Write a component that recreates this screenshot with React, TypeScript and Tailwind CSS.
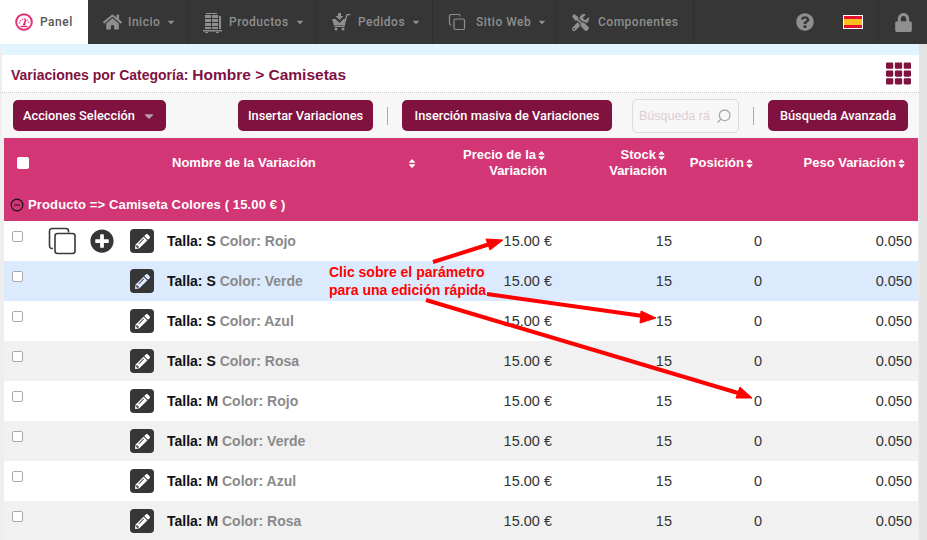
import { Copy, Search, CircleMinus } from "lucide-react";
import { FaHome, FaLock, FaPencilAlt, FaPlusCircle, FaQuestionCircle, FaSort, FaTh, FaTools, FaCaretDown } from "react-icons/fa";

const roboto = { fontFamily: "Roboto, sans-serif" };

const PanelIcon = () => (
  <svg width="18" height="18" viewBox="0 0 18 18" fill="none" className="shrink-0">
    <circle cx="9" cy="9" r="7.800" stroke="#e5337a" strokeWidth="2" />
    <path d="M4.500 10.500a4.500 4.500 0 0 1 9 0" stroke="#e5337a" strokeWidth="1.400" strokeDasharray="1.200 1.200" />
    <path d="M8.300 12L10.500 6.500L10 12Z" fill="#e5337a" stroke="#e5337a" />
    <path d="M5.500 13.500h7" stroke="#e5337a" strokeWidth="1.400" />
  </svg>
);

const StockIcon = () => (
  <svg width="19" height="21" viewBox="0 0 19 21" fill="#8f8f8f">
    <path d="M3 1h11v1H3zM2 3h6v3H2zM9 3h6v3H9zM2 7h6v3H2zM9 7h6v3H9zM2 11h6v3H2zM9 11h6v3H9zM2 15h6v2H2zM9 15h6v2H9z" />
    <path d="M16 4h2v13h-2zM0 18h19v1.500H0zM2 20h3v1H2zM13 20h3v1h-3z" />
  </svg>
);

const CartIcon = () => (
  <svg width="19" height="18" viewBox="0 0 19 18" fill="#8f8f8f">
    <path d="M6 0h3v3h2.500L7.500 7L3.500 3H6z" />
    <path d="M0 6h3.500l3 3 1 .8 1-.8 3-3H14l-1.800 6.500H2z" />
    <path d="M13 6l1.500-5H18.500v1.200h-3L13 11.500 12.500 14H2.500v-1h9z" />
    <circle cx="4" cy="16" r="1.500" />
    <circle cx="11" cy="16" r="1.500" />
  </svg>
);

const navItems = [
  { label: "Inicio", w: "w-[100px]", box: "w-[19px]", icon: <FaHome size={20} />, caret: true },
  { label: "Productos", w: "w-[129px]", box: "w-[20px]", icon: <StockIcon />, caret: true },
  { label: "Pedidos", w: "w-[116px]", box: "w-[20px]", icon: <CartIcon />, caret: true },
  { label: "Sitio Web", w: "w-[124px]", box: "w-[22px]", icon: <Copy size={18} strokeWidth={1.6} />, caret: true },
  { label: "Componentes", w: "w-[137px]", box: "w-[20px]", icon: <FaTools size={17} />, caret: false },
];

const rows = [
  { talla: "S", color: "Rojo", bg: "bg-white", first: true },
  { talla: "S", color: "Verde", bg: "bg-[#dbebfd]" },
  { talla: "S", color: "Azul", bg: "bg-white" },
  { talla: "S", color: "Rosa", bg: "bg-[#f1f1f1]" },
  { talla: "M", color: "Rojo", bg: "bg-white" },
  { talla: "M", color: "Verde", bg: "bg-[#f1f1f1]" },
  { talla: "M", color: "Azul", bg: "bg-white" },
  { talla: "M", color: "Rosa", bg: "bg-[#f1f1f1]" },
];

const gridCols = "grid grid-cols-[35px_115px_263px_135px_120px_90px_152px]";

const Btn = ({ children, className = "" }: { children: React.ReactNode; className?: string }) => (
  <button className={`h-[31px] rounded-[5px] bg-[#80123f] pt-[1px] text-[12.800px] font-medium text-white ${className}`} style={roboto}>
    {children}
  </button>
);

const Sort = () => <FaSort size={11} className="shrink-0 text-white" />;

export default function App() {
  return (
    <div className="relative h-[540px] w-[927px] overflow-hidden bg-[#eeeeee]" style={{ fontFamily: '"Liberation Sans", sans-serif' }}>
      {/* top bar */}
      <nav className="flex h-[44px] bg-[#363636] text-[12px] font-medium tracking-[0.5px] text-[#8f8f8f]" style={roboto}>
        <div className="flex w-[88px] items-center gap-[7px] bg-white pl-[15px] text-[#555]">
          <PanelIcon />
          Panel
        </div>
        {navItems.map((item) => (
          <div key={item.label} className={`flex ${item.w} items-center gap-[6px] border-r border-[#2e2e2e] pl-[15px]`}>
            <div className={`${item.box} flex shrink-0 justify-start`}>{item.icon}</div>
            <span>{item.label}</span>
            {item.caret && <FaCaretDown size={10} />}
          </div>
        ))}
        <div className="ml-auto flex items-center">
          <FaQuestionCircle size={18} />
          <div className="ml-[29px] flex h-[14px] w-[20px] flex-col border border-white">
            <div className="h-[3px] bg-[#e8112d]" />
            <div className="flex-1 bg-[#fcbf1e]" />
            <div className="h-[3px] bg-[#e8112d]" />
          </div>
          <div className="ml-[15px] flex h-[44px] w-[49px] items-center justify-center border-l border-[#2e2e2e]">
            <FaLock size={19} />
          </div>
        </div>
      </nav>

      <div className="ml-[2px] w-[917px]">
        <div className="h-[11px] bg-[#e0f5fd]" />
        {/* title */}
        <div className="flex h-[38px] items-center justify-between border-b border-dotted border-[#c8c8c8] bg-white pl-[9px] pr-[8px]">
          <h1 className="pt-[2px] text-[14px] font-bold text-[#80123f]">
            Variaciones por Categoría: <span className="text-[15.500px]">Hombre &gt; Camisetas</span>
          </h1>
          <FaTh size={25} className="text-[#80123f]" />
        </div>
        {/* toolbar */}
        <div className="flex h-[45px] items-center bg-[#f7f7f7] pl-[11px]">
          <Btn className="flex w-[153px] items-center justify-between pl-[10px] pr-[10px]">
            Acciones Selección
            <FaCaretDown size={14} className="text-[#b8a0aa]" />
          </Btn>
          <Btn className="ml-[72px] w-[135px]">Insertar Variaciones</Btn>
          <div className="mx-[14px] h-[18px] w-px bg-[#aaa]" />
          <Btn className="w-[210px]">Inserción masiva de Variaciones</Btn>
          <div className="ml-[20px] flex h-[34px] w-[107px] items-center justify-between rounded-[5px] border border-[#ddd] pl-[6px] pr-[6px]">
            <span className="overflow-hidden whitespace-nowrap pt-[1px] text-[12.500px] text-[#e0cdd4]">Búsqueda rá</span>
            <Search size={16} className="shrink-0 -scale-x-100 text-[#aaa]" />
          </div>
          <div className="mx-[14px] h-[18px] w-px bg-[#aaa]" />
          <Btn className="w-[140px]">Búsqueda Avanzada</Btn>
        </div>
      </div>

      {/* table */}
      <div className="ml-[4px] w-[914px]">
        <div className={`${gridCols} h-[50px] items-center bg-[#d23674] text-[13px] font-bold leading-[16px] text-white`}>
          <div className="pl-[13px]">
            <div className="h-[12px] w-[12px] rounded-[2px] bg-white" />
          </div>
          <div className="col-span-2 flex items-center">
            <span className="ml-[133px] w-[256px] whitespace-nowrap">Nombre de la Variación</span>
            <FaSort size={11} />
          </div>
          <div className="flex justify-end pr-[5px] text-right">
            <div>
              <div className="flex items-center justify-end">Precio de la<Sort /></div>
              <div>Variación</div>
            </div>
          </div>
          <div className="flex justify-end pr-[5px] text-right">
            <div>
              <div className="flex items-center justify-end">Stock<Sort /></div>
              <div>Variación</div>
            </div>
          </div>
          <div className="flex items-center justify-end pr-[7px]">Posición<Sort /></div>
          <div className="flex items-center justify-end pr-[7px]">Peso Variación<Sort /></div>
        </div>
        <div className="flex h-[33px] items-center gap-[4px] bg-[#d23674] pl-[6px] pt-[1px] text-[13px] font-bold tracking-[0.13px] text-white">
          <CircleMinus size={14} className="text-[#111]" />
          Producto =&gt; Camiseta Colores ( 15.00 € )
        </div>
        {rows.map((r, i) => (
          <div key={i} className={`${gridCols} h-[40px] items-center ${r.bg} text-[14.500px] text-[#333]`}>
            <div className="pl-[8px]">
              <div className="-mt-[10px] h-[11px] w-[11px] rounded-[2px] border border-[#aaa] bg-white" />
            </div>
            <div className="flex items-center pl-[9px]">
              {r.first && (
                <>
                  <svg width="28" height="28" viewBox="0 0 28 28" fill="none" stroke="#3a3a3a" strokeWidth="1.6">
                    <path d="M5 21.500h-1a2.500 2.500 0 0 1-2.500-2.500V4A2.500 2.500 0 0 1 4 1.500h14a2.500 2.500 0 0 1 2.500 2.500v1.500" />
                    <rect x="7" y="6.500" width="20" height="20" rx="2.500" />
                  </svg>
                  <FaPlusCircle size={24} className="ml-[14px] text-[#363636]" />
                </>
              )}
            </div>
            <div className="flex items-center">
              <div className="-ml-[24px] flex h-[24px] w-[24px] items-center justify-center rounded-[4px] bg-[#363636]">
                <FaPencilAlt size={15} className={r.bg === "bg-[#dbebfd]" ? "text-[#dbebfd]" : "text-white"} />
              </div>
              <span className="ml-[13px] pt-[1px] text-[14px] font-bold text-[#111]">
                Talla: {r.talla} <span className="text-[#8a8a8a]">Color: {r.color}</span>
              </span>
            </div>
            <div className="pt-[1px] text-right">15.00 €</div>
            <div className="pt-[1px] text-right">15</div>
            <div className="pt-[1px] text-right">0</div>
            <div className="pr-[2px] pt-[1px] text-right">0.050</div>
          </div>
        ))}
      </div>

      {/* scrollbar */}
      <div className="absolute bottom-0 right-0 top-[44px] w-[8px] bg-[#e4e4e4]" />

      {/* annotation */}
      <div className="absolute left-[329px] top-[263px] text-[14px] font-bold leading-[18px] text-[#fe0000]">
        Clic sobre el parámetro
        <br />
        para una edición rápida
      </div>
      <svg className="absolute left-0 top-0" width="927" height="540" fill="#fe0000" stroke="#fe0000">
        <path d="M433 262L490 244" strokeWidth="4" />
        <path d="M503 240L486 239L490 250Z" />
        <path d="M487 294L643 316" strokeWidth="4" />
        <path d="M656 318L641 311L640 323Z" />
        <path d="M426 300L738 393" strokeWidth="4" />
        <path d="M752 398L740 387L736 398Z" />
      </svg>
    </div>
  );
}
